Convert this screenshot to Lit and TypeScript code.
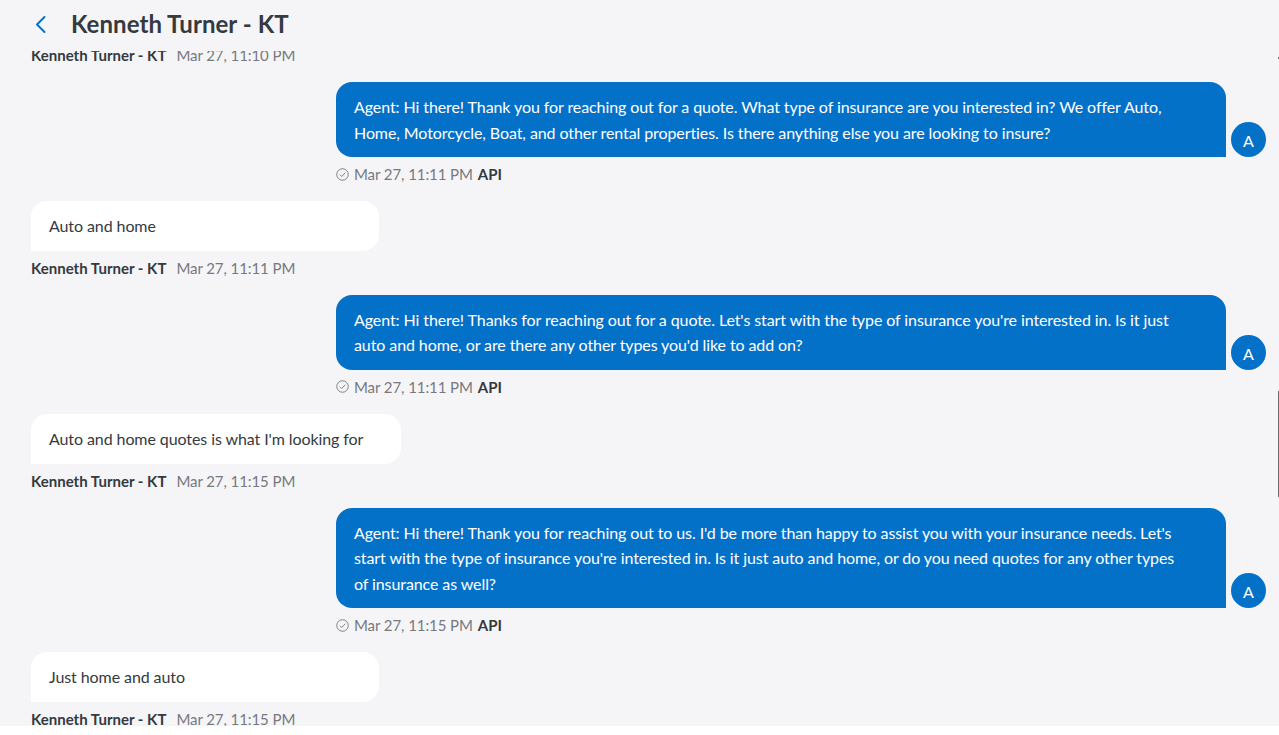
import { LitElement, html, css, svg } from 'lit';
import { customElement } from 'lit/decorators.js';

type Msg =
  | { side: 'in'; text: string; time: string }
  | { side: 'out'; text: string; time: string };

const NAME = 'Kenneth Turner - KT';

const MESSAGES: Msg[] = [
  {
    side: 'out',
    time: 'Mar 27, 11:11 PM',
    text: 'Agent: Hi there! Thank you for reaching out for a quote. What type of insurance are you interested in? We offer Auto, Home, Motorcycle, Boat, and other rental properties. Is there anything else you are looking to insure?',
  },
  { side: 'in', time: 'Mar 27, 11:11 PM', text: 'Auto and home' },
  {
    side: 'out',
    time: 'Mar 27, 11:11 PM',
    text: "Agent: Hi there! Thanks for reaching out for a quote. Let's start with the type of insurance you're interested in. Is it just auto and home, or are there any other types you'd like to add on?",
  },
  { side: 'in', time: 'Mar 27, 11:15 PM', text: "Auto and home quotes is what I'm looking for" },
  {
    side: 'out',
    time: 'Mar 27, 11:15 PM',
    text: "Agent: Hi there! Thank you for reaching out to us. I'd be more than happy to assist you with your insurance needs. Let's start with the type of insurance you're interested in. Is it just auto and home, or do you need quotes for any other types of insurance as well?",
  },
  { side: 'in', time: 'Mar 27, 11:15 PM', text: 'Just home and auto' },
];

const checkIcon = svg`<svg viewBox="0 0 14 14" width="13" height="13" fill="none" stroke="#77797f" stroke-width="1">
  <circle cx="7" cy="7" r="6.2"/>
  <path d="M4.2 7.2l2 2 3.7-4.1"/>
</svg>`;

@customElement('app-root')
export class AppRoot extends LitElement {
  static styles = css`
    :host {
      display: block;
      height: 735px;
      background: #fff;
      font-family: Lato, sans-serif;
      color: #343a40;
    }
    .page {
      position: relative;
      height: 726px;
      background: #f5f5f8;
      display: flex;
      flex-direction: column;
      overflow: hidden;
    }
    .head {
      flex: none;
      box-sizing: border-box;
      height: 51px;
      padding: 0 0 3px 33px;
      display: flex;
      align-items: center;
      gap: 24px;
    }
    .head svg {
      display: block;
    }
    .head h1 {
      margin: 0;
      font-size: 24px;
      font-weight: 700;
      line-height: 48px;
      letter-spacing: 0.05px;
      color: #343a40;
    }
    .scroll {
      flex: 1;
      min-height: 0;
      overflow: hidden;
    }
    .list {
      display: flex;
      flex-direction: column;
      margin-top: -13px;
      padding: 0 13px 0 31px;
    }
    .meta {
      display: flex;
      align-items: center;
      height: 20px;
      font-size: 15px;
      line-height: 20px;
      color: #77797f;
    }
    .meta span {
      letter-spacing: -0.08px;
    }
    .meta b {
      font-weight: 700;
      color: #343a40;
    }
    .row {
      display: flex;
      flex-direction: column;
      margin-top: 17px;
    }
    .first {
      margin-top: 0;
    }
    .in .meta {
      gap: 10px;
      margin-top: 7px;
    }
    .in .bubble {
      align-self: flex-start;
      box-sizing: border-box;
      min-width: 348px;
      padding: 12px 38px 12px 18px;
      background: #fff;
      border-radius: 16px 16px 16px 0;
    }
    .out {
      display: grid;
      grid-template-columns: 890px 35px;
      column-gap: 5px;
      justify-content: end;
    }
    .out .bubble {
      box-sizing: border-box;
      padding: 12px 36px 12px 18px;
      background: #0471c9;
      color: #fff;
      border-radius: 16px 16px 0 16px;
    }
    .out .meta {
      grid-column: 1;
      gap: 5px;
      margin-top: 7px;
    }
    .bubble {
      font-size: 16px;
      line-height: 25.6px;
      letter-spacing: -0.09px;
    }
    .avatar {
      align-self: end;
      width: 35px;
      height: 35px;
      border-radius: 50%;
      background: #0471c9;
      color: #fff;
      font-size: 16px;
      line-height: 38px;
      text-align: center;
    }
    .thumb {
      position: absolute;
      right: 0;
      top: 391px;
      width: 1px;
      height: 106px;
      background: #6b6d72;
    }
    .tick {
      position: absolute;
      right: 0;
      top: 57px;
      width: 1px;
      height: 2px;
      background: #6b6d72;
    }
  `;

  renderMessage(m: Msg) {
    if (m.side === 'in') {
      return html`<div class="row in">
        <div class="bubble">${m.text}</div>
        <div class="meta"><b>${NAME}</b><span>${m.time}</span></div>
      </div>`;
    }
    return html`<div class="row out">
      <div class="bubble">${m.text}</div>
      <div class="avatar">A</div>
      <div class="meta">${checkIcon}<span>${m.time}</span><b>API</b></div>
    </div>`;
  }

  render() {
    return html`<div class="page">
      <header class="head">
        <svg viewBox="0 0 14 20" width="14" height="20" fill="none" stroke="#0471c9" stroke-width="2" stroke-linecap="round" stroke-linejoin="round">
          <path d="M11.5 3L4 10.5l7.5 7.5" />
        </svg>
        <h1>${NAME}</h1>
      </header>
      <div class="scroll">
        <div class="list">
          <div class="in first">
            <div class="meta"><b>${NAME}</b><span>Mar 27, 11:10 PM</span></div>
          </div>
          ${MESSAGES.map((m) => this.renderMessage(m))}
        </div>
      </div>
      <div class="tick"></div>
      <div class="thumb"></div>
    </div>`;
  }
}
